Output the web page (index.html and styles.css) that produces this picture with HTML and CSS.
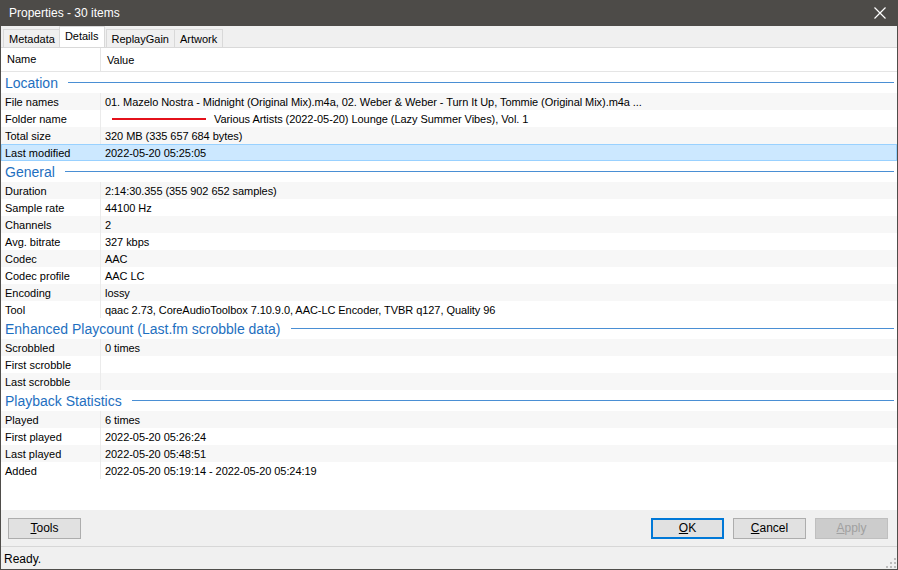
FILE: index.html
```html
<!DOCTYPE html>
<html lang="en">

<head>
    <meta charset="UTF-8">
    <title>Properties - 30 items</title>
    <link rel="stylesheet" href="styles.css">
</head>

<body>
    <div class="window">
        <div class="titleBar">
            <span class="titleText">Properties - 30 items</span>
            <svg class="closeIcon" width="12" height="12" viewBox="0 0 12 12">
                <path d="M0.5 0.5 L11.5 11.5 M11.5 0.5 L0.5 11.5" stroke="#ffffff" stroke-width="1.2" fill="none" />
            </svg>
        </div>

        <div class="tabStrip">
            <div class="tab">Metadata</div>
            <div class="tab active">Details</div>
            <div class="tab">ReplayGain</div>
            <div class="tab">Artwork</div>
        </div>

        <div class="listView">
            <div class="listHeader">
                <div class="colName">Name</div>
                <div class="colValue">Value</div>
            </div>

            <div class="group">
                <div class="groupTitle"><span>Location</span></div>
                <div class="row"><div class="cellName">File names</div><div class="cellValue">01. Mazelo Nostra - Midnight (Original Mix).m4a, 02. Weber &amp; Weber - Turn It Up, Tommie (Original Mix).m4a ...</div></div>
                <div class="row"><div class="cellName">Folder name</div><div class="cellValue"><span class="redLine"></span><span>Various Artists (2022-05-20) Lounge (Lazy Summer Vibes), Vol. 1</span></div></div>
                <div class="row"><div class="cellName">Total size</div><div class="cellValue">320 MB (335 657 684 bytes)</div></div>
                <div class="row selected"><div class="cellName">Last modified</div><div class="cellValue">2022-05-20 05:25:05</div></div>
            </div>

            <div class="group">
                <div class="groupTitle"><span>General</span></div>
                <div class="row"><div class="cellName">Duration</div><div class="cellValue">2:14:30.355 (355 902 652 samples)</div></div>
                <div class="row"><div class="cellName">Sample rate</div><div class="cellValue">44100 Hz</div></div>
                <div class="row"><div class="cellName">Channels</div><div class="cellValue">2</div></div>
                <div class="row"><div class="cellName">Avg. bitrate</div><div class="cellValue">327 kbps</div></div>
                <div class="row"><div class="cellName">Codec</div><div class="cellValue">AAC</div></div>
                <div class="row"><div class="cellName">Codec profile</div><div class="cellValue">AAC LC</div></div>
                <div class="row"><div class="cellName">Encoding</div><div class="cellValue">lossy</div></div>
                <div class="row"><div class="cellName">Tool</div><div class="cellValue">qaac 2.73, CoreAudioToolbox 7.10.9.0, AAC-LC Encoder, TVBR q127, Quality 96</div></div>
            </div>

            <div class="group">
                <div class="groupTitle"><span>Enhanced Playcount (Last.fm scrobble data)</span></div>
                <div class="row"><div class="cellName">Scrobbled</div><div class="cellValue">0 times</div></div>
                <div class="row"><div class="cellName">First scrobble</div><div class="cellValue"></div></div>
                <div class="row"><div class="cellName">Last scrobble</div><div class="cellValue"></div></div>
            </div>

            <div class="group">
                <div class="groupTitle"><span>Playback Statistics</span></div>
                <div class="row"><div class="cellName">Played</div><div class="cellValue">6 times</div></div>
                <div class="row"><div class="cellName">First played</div><div class="cellValue">2022-05-20 05:26:24</div></div>
                <div class="row"><div class="cellName">Last played</div><div class="cellValue">2022-05-20 05:48:51</div></div>
                <div class="row"><div class="cellName">Added</div><div class="cellValue">2022-05-20 05:19:14 - 2022-05-20 05:24:19</div></div>
            </div>
        </div>

        <div class="buttonBar">
            <button class="btn"><u>T</u>ools</button>
            <div class="spacer"></div>
            <button class="btn default"><u>O</u>K</button>
            <button class="btn"><u>C</u>ancel</button>
            <button class="btn disabled"><u>A</u>pply</button>
        </div>

        <div class="statusBar">
            <span>Ready.</span>
            <svg class="sizeGrip" width="10" height="10" viewBox="0 0 10 10">
                <rect x="8" y="0" width="2" height="2" fill="#bcbcbc" />
                <rect x="4" y="4" width="2" height="2" fill="#bcbcbc" />
                <rect x="8" y="4" width="2" height="2" fill="#bcbcbc" />
                <rect x="0" y="8" width="2" height="2" fill="#bcbcbc" />
                <rect x="4" y="8" width="2" height="2" fill="#bcbcbc" />
                <rect x="8" y="8" width="2" height="2" fill="#bcbcbc" />
            </svg>
        </div>
    </div>
</body>

</html>
```

FILE: styles.css
```css
* {
    margin: 0;
    padding: 0;
    box-sizing: border-box;
}

body {
    width: 898px;
    height: 570px;
    font-family: "Liberation Sans", Arial, sans-serif;
    font-size: 11px;
    color: #000000;
    background-color: #f0f0f0;
    overflow: hidden;
}

.window {
    width: 898px;
    height: 570px;
    display: flex;
    flex-direction: column;
    border: 1px solid #4f4d4a;
    border-top: none;
    background-color: #f0f0f0;
}

.titleBar {
    height: 26px;
    margin: 0 -1px;
    padding: 0 12px 0 9px;
    display: flex;
    align-items: center;
    justify-content: space-between;
    background-color: #4d4b48;
    color: #ffffff;
    font-size: 12px;
}

.closeIcon {
    display: block;
}

.tabStrip {
    height: 21px;
    display: flex;
    align-items: flex-end;
    padding-left: 2px;
    background-color: #f0f0f0;
}

.tab {
    height: 18px;
    padding: 0 5px;
    line-height: 18px;
    font-size: 11px;
    border: 1px solid #d9d9d9;
    border-bottom: none;
    margin-right: -1px;
    background-color: #f0f0f0;
}

.tab.active {
    height: 21px;
    line-height: 18px;
    background-color: #ffffff;
    position: relative;
    z-index: 1;
    margin: 0 1px 0 -1px;
}

.listView {
    flex: 1;
    background-color: #ffffff;
    border-top: 1px solid #d9d9d9;
}

.listHeader {
    height: 24px;
    display: flex;
    align-items: center;
    border-bottom: 1px solid #e5e5e5;
}

.colName {
    width: 100px;
    height: 100%;
    padding-left: 6px;
    line-height: 22px;
    border-right: 1px solid #e5e5e5;
}

.colValue {
    padding-left: 6px;
}

.groupTitle {
    height: 21px;
    display: flex;
    align-items: center;
    padding: 0 3px 0 4px;
    font-size: 14px;
    color: #1e6fc0;
}

.groupTitle::after {
    content: "";
    flex: 1;
    height: 1px;
    margin-left: 10px;
    background-color: #4a8fd4;
}

.row {
    height: 17px;
    display: flex;
    line-height: 18px;
}

.group .row:nth-child(even) {
    background-color: #f7f7f7;
}

.group .row.selected {
    background-color: #cce8ff;
    box-shadow: inset 0 0 0 1px #99d1ff;
}

.cellName {
    width: 100px;
    height: 100%;
    padding-left: 4px;
    border-right: 1px solid #ebebeb;
    white-space: nowrap;
}

.row.selected .cellName {
    border-right-color: transparent;
}

.cellValue {
    padding-left: 4px;
    white-space: nowrap;
    display: flex;
    align-items: center;
    letter-spacing: -0.06px;
}

.redLine {
    display: inline-block;
    width: 94px;
    height: 2px;
    margin: 0 8px 0 7px;
    background-color: #e4111b;
}

.buttonBar {
    height: 36px;
    display: flex;
    align-items: center;
    gap: 9px;
    padding: 0 9px 0 7px;
}

.spacer {
    flex: 1;
}

.btn {
    width: 73px;
    height: 21px;
    font-family: "Liberation Sans", Arial, sans-serif;
    font-size: 12px;
    color: #000000;
    background-color: #e1e1e1;
    border: 1px solid #adadad;
}

.btn.default {
    border: 2px solid #0078d7;
}

.btn.disabled {
    color: #a0a0a0;
    background-color: #cccccc;
    border-color: #bfbfbf;
}

.statusBar {
    height: 23px;
    display: flex;
    align-items: center;
    justify-content: space-between;
    padding: 1px 1px 0 3px;
    border-top: 1px solid #d7d7d7;
    font-size: 12px;
}

.sizeGrip {
    align-self: flex-end;
    margin-bottom: 1px;
}
```
